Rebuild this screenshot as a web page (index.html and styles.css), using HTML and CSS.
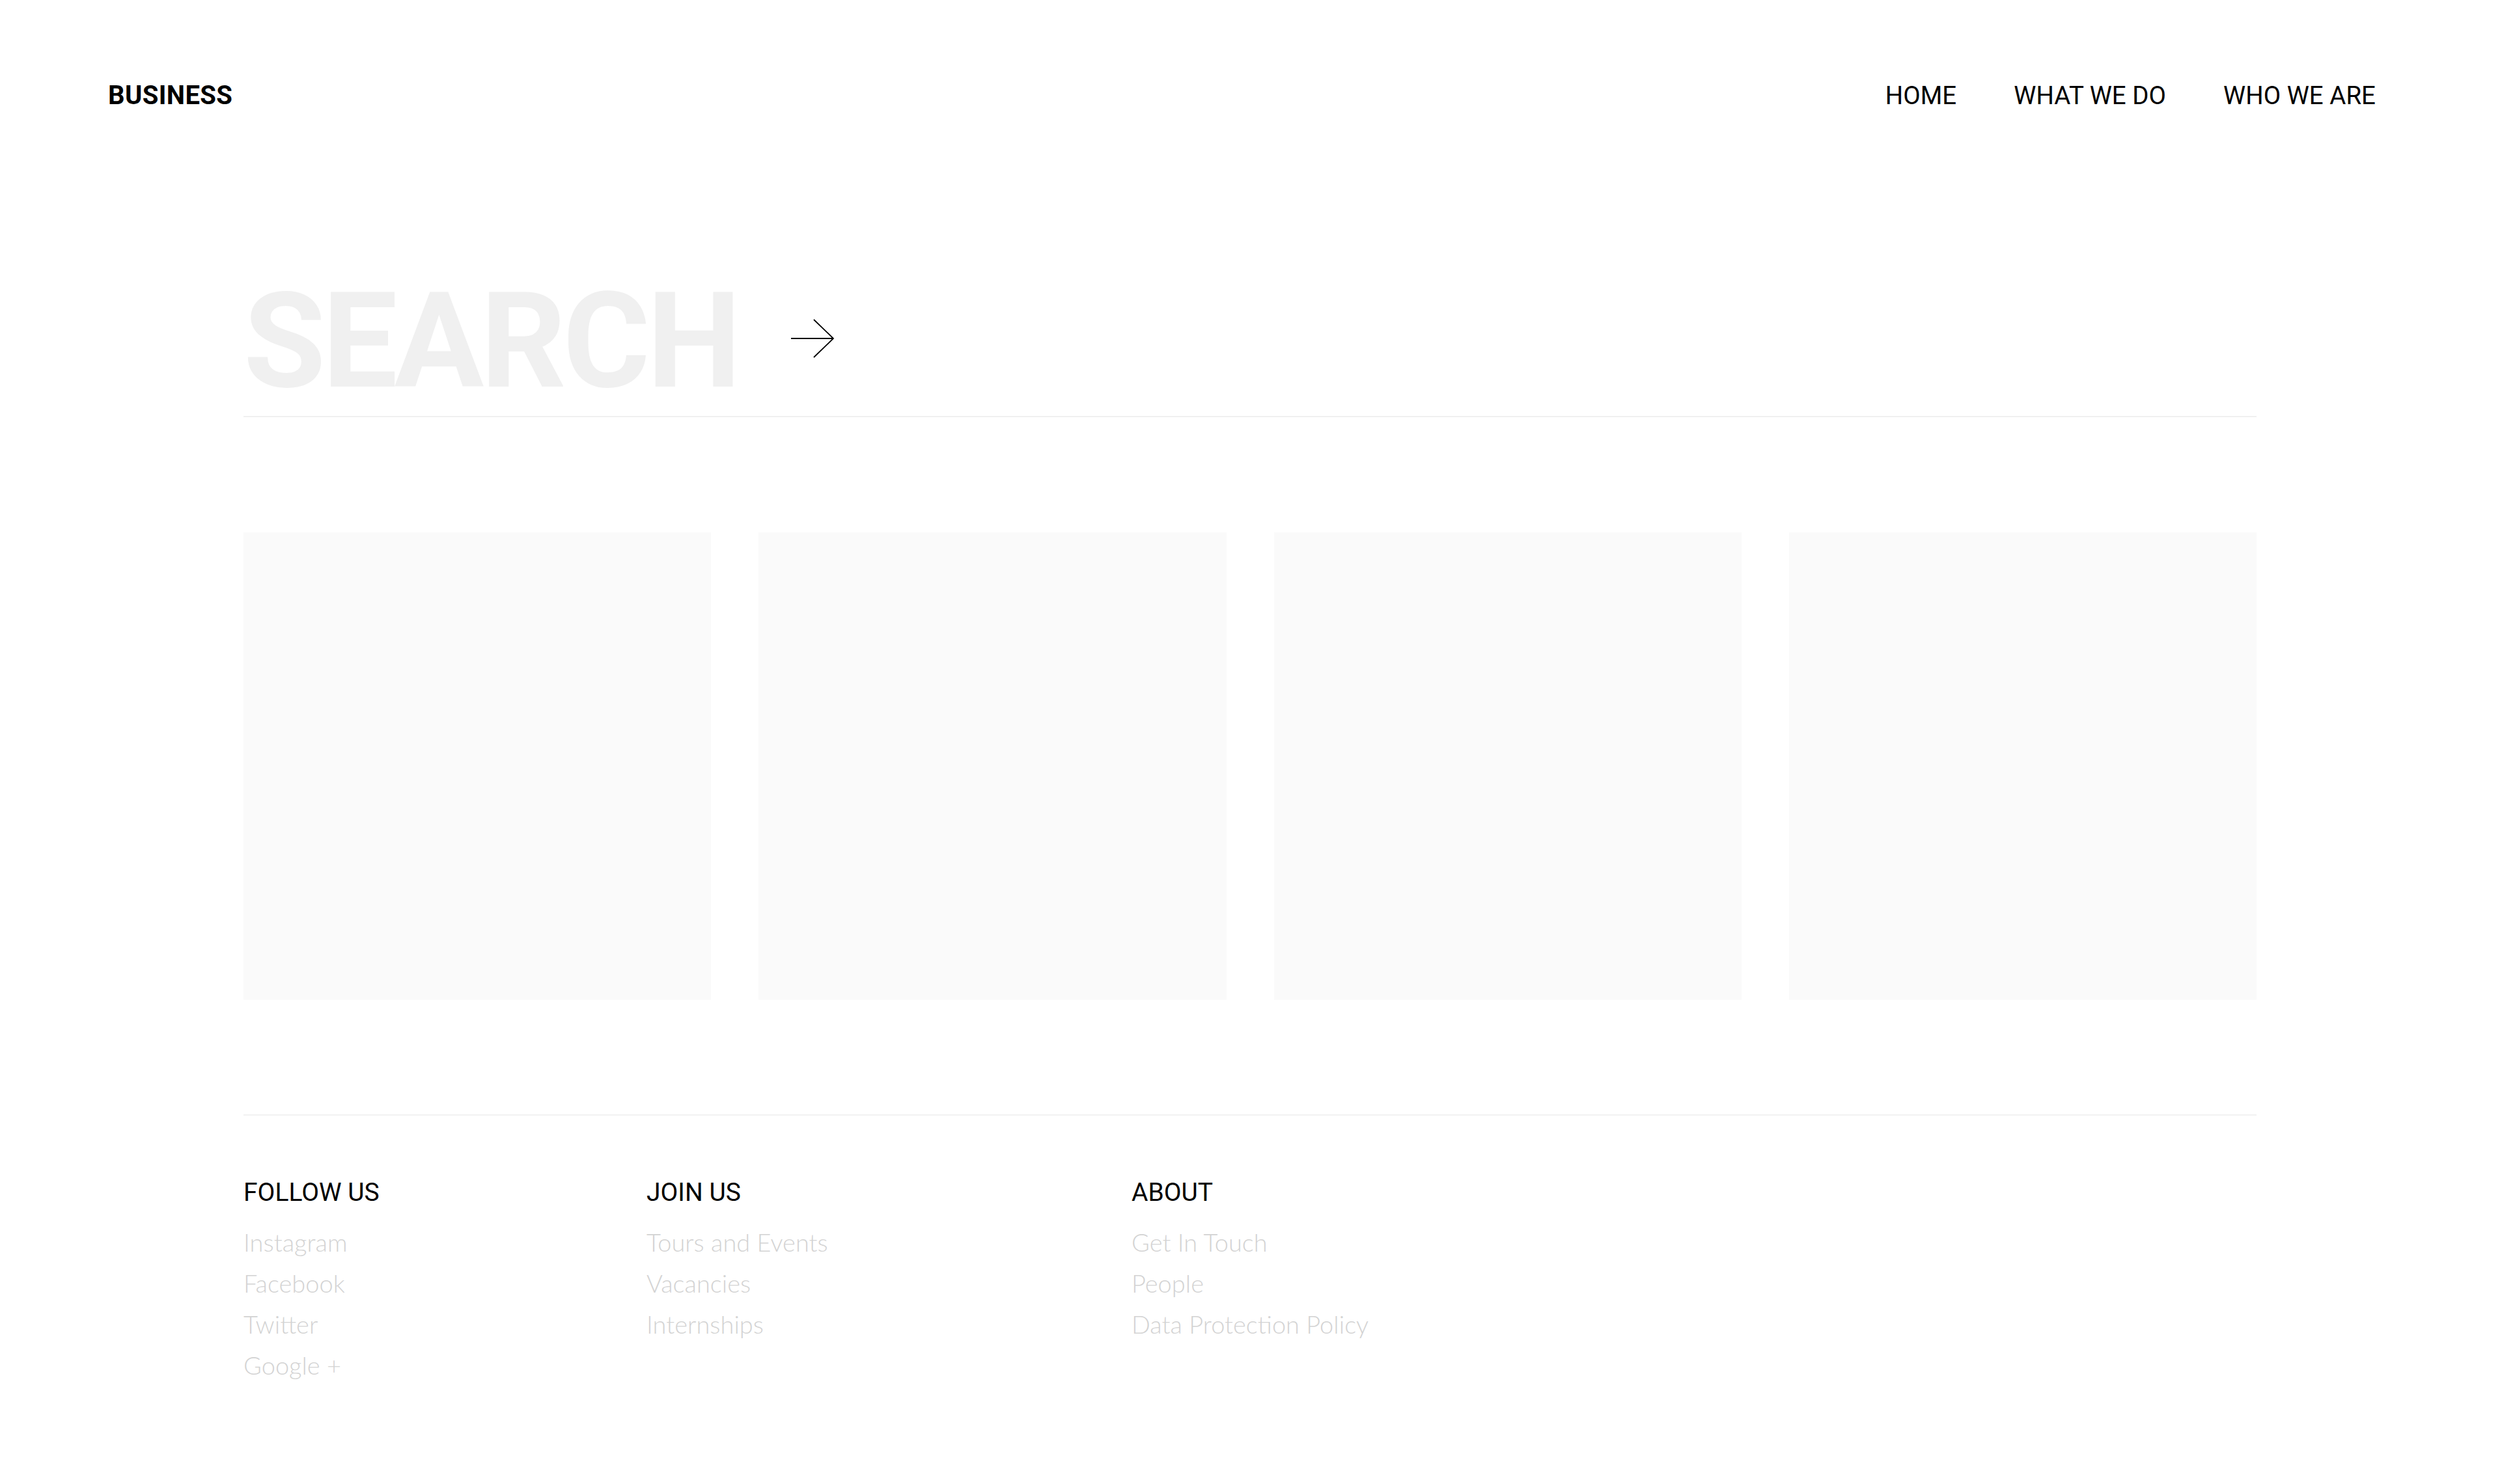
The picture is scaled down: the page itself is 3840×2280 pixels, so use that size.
FILE: index.html
```html
<!DOCTYPE html>
<html lang="en">
<head>
<meta charset="utf-8">
<title>Business – Search</title>
<link rel="stylesheet" href="styles.css">
</head>
<body>
<header class="site-header">
  <div class="logo">BUSINESS</div>
  <nav class="main-nav">
    <a href="#">HOME</a>
    <a href="#">WHAT WE DO</a>
    <a href="#">WHO WE ARE</a>
  </nav>
</header>

<main class="page">
  <div class="search-row">
    <span class="search-label">SEARCH</span>
    <svg class="search-arrow" width="68" height="62" viewBox="0 0 68 62" aria-hidden="true">
      <path d="M1 31 H66" stroke="#000" stroke-width="2.2" fill="none"/>
      <path d="M36 2 L66 31 L36 60" stroke="#000" stroke-width="1.8" fill="none"/>
    </svg>
  </div>

  <section class="cards">
    <div class="card"></div>
    <div class="card"></div>
    <div class="card"></div>
    <div class="card"></div>
  </section>

  <footer class="site-footer">
    <div class="footer-col">
      <h3>FOLLOW US</h3>
      <ul>
        <li>Instagram</li>
        <li>Facebook</li>
        <li>Twitter</li>
        <li>Google +</li>
      </ul>
    </div>
    <div class="footer-col">
      <h3>JOIN US</h3>
      <ul>
        <li>Tours and Events</li>
        <li>Vacancies</li>
        <li>Internships</li>
      </ul>
    </div>
    <div class="footer-col">
      <h3>ABOUT</h3>
      <ul>
        <li>Get In Touch</li>
        <li>People</li>
        <li>Data Protection Policy</li>
      </ul>
    </div>
  </footer>
</main>
</body>
</html>
```

FILE: styles.css
```css
html, body {
  margin: 0;
  padding: 0;
  background: #ffffff;
}

body {
  font-family: Roboto, "Liberation Sans", Arial, sans-serif;
  color: #000;
  width: 3840px;
  min-height: 2280px;
}

.site-header {
  display: flex;
  justify-content: space-between;
  align-items: baseline;
  padding: 127px 191px 0 166px;
}

.logo {
  font-family: Roboto, "Liberation Sans", sans-serif;
  font-weight: 700;
  font-size: 40px;
  line-height: 1;
  letter-spacing: 0.4px;
}

.main-nav {
  display: flex;
  gap: 88px;
}

.main-nav a {
  color: #000;
  text-decoration: none;
  font-size: 38.5px;
  line-height: 1;
}

.page {
  width: 3092px;
  margin: 0 auto;
}

.search-row {
  display: flex;
  align-items: center;
  gap: 81px;
  margin-top: 255px;
  padding-bottom: 12px;
  border-bottom: 2px solid #f0f0f0;
}

.search-label {
  font-family: Roboto, "Liberation Sans", sans-serif;
  font-weight: 700;
  font-size: 205px;
  line-height: 1;
  letter-spacing: -5px;
  color: #f0f0f0;
}

.search-arrow {
  display: block;
  margin-bottom: 9px;
}

.cards {
  display: grid;
  grid-template-columns: repeat(4, 1fr);
  gap: 73px;
  margin-top: 177px;
}

.card {
  aspect-ratio: 1 / 1;
  background: #fafafa;
}

.site-footer {
  display: grid;
  grid-template-columns: 619px 745px 1fr;
  margin-top: 176px;
  border-top: 2px solid #f2f2f2;
  padding-top: 99px;
}

.footer-col h3 {
  margin: 0;
  font-weight: 400;
  font-size: 39px;
  line-height: 1;
}

.footer-col ul {
  list-style: none;
  margin: 25px 0 0;
  padding: 0;
}

.footer-col li {
  font-family: Lato, "Open Sans", sans-serif;
  font-weight: 300;
  font-size: 38px;
  line-height: 63px;
  color: #d3d3d3;
}
```
